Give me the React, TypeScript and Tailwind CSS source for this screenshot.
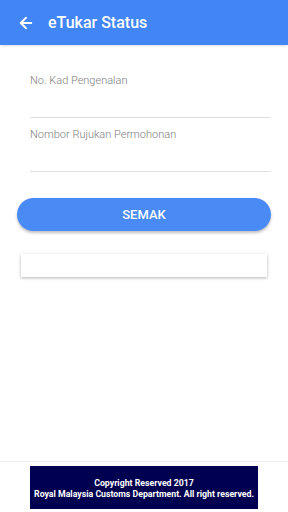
import React from 'react';
import { ArrowLeft } from 'lucide-react';

export default function App() {
  return (
    <div className="w-[288px] h-[512px] bg-white flex flex-col font-['Roboto',sans-serif] overflow-hidden">
      {/* Header */}
      <div className="h-[45px] bg-[#4285f4] flex items-center shadow-sm shrink-0">
        <ArrowLeft size={18} strokeWidth={2.5} className="text-white ml-[17px]" />
        <h1 className="ml-[13px] text-white text-[16px] font-medium">eTukar Status</h1>
      </div>

      {/* Form */}
      <div className="px-[30px] pt-[28px] pr-[17px]">
        <div className="border-b border-[#e0e0e0] h-[45px]">
          <label className="block text-[11px] font-light text-[#808080]">No. Kad Pengenalan</label>
        </div>
        <div className="border-b border-[#e0e0e0] h-[54px] pt-[9px]">
          <label className="block text-[11px] font-light text-[#808080]">Nombor Rujukan Permohonan</label>
        </div>
      </div>

      <div className="px-[17px] mt-[26px]">
        <button className="w-full h-[33px] rounded-full bg-[#4a8af4] text-white text-[13px] font-medium shadow-[0_2px_3px_rgba(0,0,0,0.25)]">
          SEMAK
        </button>
      </div>

      <div className="mx-[21px] mt-[23px] h-[23px] bg-white shadow-[0_1px_3px_rgba(0,0,0,0.3)]"></div>

      <div className="flex-1" />

      {/* Footer */}
      <div className="border-t border-[#eeeeee] h-[51px] flex justify-center pt-[4px] shrink-0">
        <div className="w-[228px] h-[43px] bg-[#000050] text-white text-[8.75px] font-bold leading-[11px] flex flex-col items-center justify-center pt-[2px]">
          <span>Copyright Reserved 2017</span>
          <span>Royal Malaysia Customs Department. All right reserved.</span>
        </div>
      </div>
    </div>
  );
}
